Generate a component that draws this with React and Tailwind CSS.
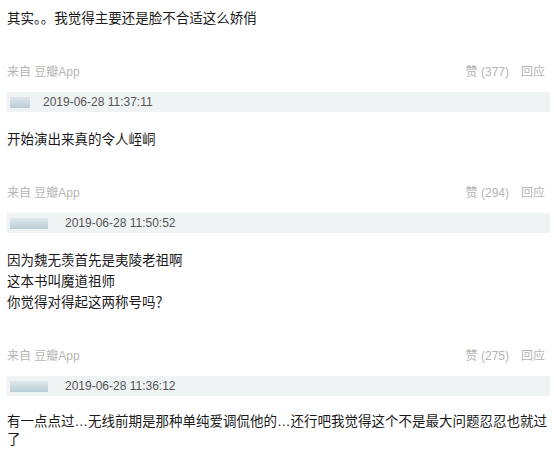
const comments = [
	{
		lines: ["其实。。我觉得主要还是脸不合适这么娇俏"],
		likes: 377,
		time: "2019-06-28 11:37:11",
		short: true,
	},
	{
		lines: ["开始演出来真的令人峌峒"],
		likes: 294,
		time: "2019-06-28 11:50:52",
	},
	{
		lines: ["因为魏无羡首先是夷陵老祖啊", "这本书叫魔道祖师", "你觉得对得起这两称号吗？"],
		likes: 275,
		time: "2019-06-28 11:36:12",
	},
];

const font = { fontFamily: '"Liberation Sans", "Noto Sans CJK SC", sans-serif' };

const Meta = ({ likes, time, short }) => (
	<>
		<div className="mt-[33px] h-[20px] flex items-center justify-between pr-[9px] text-[12px] text-[#b5b5b5]">
			<span>来自 豆瓣App</span>
			<span className="flex gap-[12px]">
				<span>赞 ({likes})</span>
				<span>回应</span>
			</span>
		</div>
		<div className="mt-[10px] mr-[4px] h-[20px] bg-[#eff3f3] flex items-center">
			<div
				className={
					"ml-[3px] h-[11px] bg-gradient-to-b from-[#dfe8ec] to-[#b9cdd7] blur-[0.6px] " +
					(short ? "w-[20px]" : "w-[38px]")
				}
			/>
			<span className={"text-[12px] text-[#555] " + (short ? "ml-[13px]" : "ml-[17px]")}>{time}</span>
		</div>
	</>
);

export default function App() {
	return (
		<div className="w-[554px] h-[467px] bg-white pl-[7px] pt-[8px] overflow-hidden" style={font}>
			{comments.map((c, i) => (
				<div key={i} className={i > 0 ? "mt-[17px]" : ""}>
					<div className="text-[13.5px] leading-[21px] text-[#1a1a1a]">
						{c.lines.map((l, j) => (
							<div key={j}>{l}</div>
						))}
					</div>
					<Meta likes={c.likes} time={c.time} short={c.short} />
				</div>
			))}
			<div className="mt-[17px] text-[13.5px] leading-[18px] text-[#1a1a1a] whitespace-nowrap">
				有一点点过…无线前期是那种单纯爱调侃他的…还行吧我觉得这个不是最大问题忍忍也就过
				<br />了
			</div>
		</div>
	);
}
